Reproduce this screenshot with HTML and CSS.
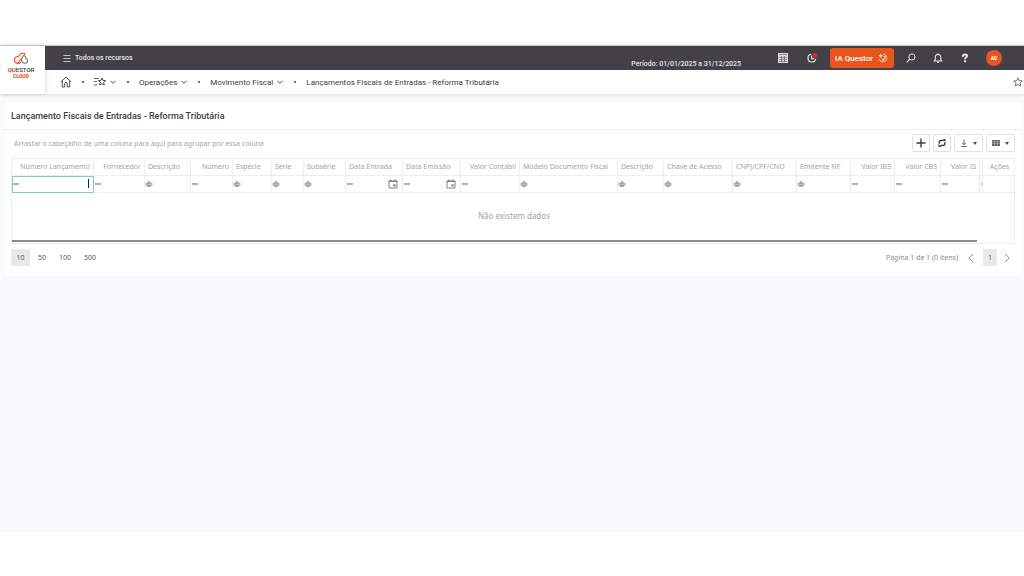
FILE: index.html
```html
<!DOCTYPE html>
<html lang="pt-BR">
<head>
<meta charset="utf-8">
<meta name="viewport" content="width=device-width, initial-scale=1">
<title>Lançamentos Fiscais de Entradas - Reforma Tributária</title>
<link rel="stylesheet" href="styles.css">
</head>
<body>
<svg class="defs" width="0" height="0" aria-hidden="true">
  <symbol id="chev" viewBox="0 0 8 8"><path d="M1.500 2.800 4 5.300l2.500-2.500" fill="none" stroke="currentColor" stroke-width=".9"/></symbol>
  <symbol id="eq" viewBox="0 0 8 8"><path d="M1 3.500h6M1 4.600h6" stroke="currentColor" stroke-width=".9"/></symbol>
  <symbol id="has" viewBox="0 0 8 8"><path d="M2.500 1.200h3v1.700h1.900v2.800H5.900v1.400H2.100V5.700H.6V2.900h1.900z" fill="currentColor"/><path d="M1 4.400h6" stroke="#fff" stroke-width=".3"/></symbol>
  <symbol id="cal" viewBox="0 0 10 10"><path d="M1 2h8v7H1z" fill="none" stroke="currentColor" stroke-width="1"/><path d="M.6 2.400h8.800M2.800.5v1.500M7.200.5v1.500" stroke="currentColor" stroke-width="1.200"/><path d="M5.400 5.300h2.200v2.200H5.400z" fill="currentColor"/></symbol>
</svg>
<div class="app">
  <header class="header">
    <a class="logo" href="#">
      <svg class="logo-mark" viewBox="0 0 16 13" aria-hidden="true"><g fill="none" stroke-width="1.100" stroke-linecap="round"><path d="M8 10.500C6 12 1.500 11.500 1.300 8.200 1.200 5.500 3.600 4 5.800 4.200 6.800 1.600 9.500.7 11.800 1.600M11.800 1.600C10.500 4.500 7.500 8 5.300 10.300" stroke="#e8541f"/><path d="M8.300 6C7.800 8.500 10 11.300 12.300 11.300 15.200 11.200 15.500 7 12.800 6.300 13 5 12.500 4.300 11.600 3.800" stroke="#77747b"/></g></svg>
      <span class="logo-name"><b class="accent">Q</b>UESTOR</span>
      <span class="logo-sub accent">CLOUD</span>
    </a>
    <div class="bars">
      <div class="topbar">
        <button class="all" type="button"><svg class="i8" viewBox="0 0 8 8"><path d="M.5 1.500h7M.5 4.500h7M.5 7.500h7" stroke="currentColor" stroke-width=".8"/></svg>Todos os recursos</button>
        <span class="period">Período: 01/01/2025 a 31/12/2025</span>
        <div class="tools">
          <button class="tool" type="button" aria-label="Calculadora"><svg class="i10" viewBox="0 0 10 10"><path d="M0 0h10v10H0z" fill="#dcdcdc"/><path d="M1 1.500h8M1 4.500h8M1 6.500h8M1 8.500h8M3.500 3v6M6.500 3v6" stroke="#56555a" stroke-width=".6"/></svg></button>
          <button class="tool" type="button" aria-label="Histórico"><svg class="i10" viewBox="0 0 10 10"><path d="M4.200 1.300a3.900 3.900 0 1 0 4.500 4.500M4.600 2.500v3.200h2.600" fill="none" stroke="#e8e8e8" stroke-width="1.100"/><circle cx="7.700" cy="2.400" r="2.300" fill="#e32626"/></svg></button>
          <button class="ia" type="button">IA Questor<svg class="i10" viewBox="0 0 10 10"><path d="M5 1.200a3.900 3.900 0 1 1-3.700 5" fill="none" stroke="#ffd9c9" stroke-width=".8"/><path d="m2.700.6.6 1.600 1.600.6-1.600.6-.6 1.600-.6-1.600L.5 2.800l1.600-.6z" fill="#fff"/><path d="m3.500 5 2 1.800M6 3.500l1.500 1.600M5 7.800 7.500 5" stroke="#fff" stroke-width=".7"/><circle cx="6.700" cy="3.600" r=".8" fill="#fff"/><circle cx="5" cy="6.800" r=".9" fill="#fff"/></svg></button>
          <button class="tool" type="button" aria-label="Pesquisar"><svg class="i10" viewBox="0 0 10 10"><circle cx="5.900" cy="4" r="3.100" fill="none" stroke="currentColor" stroke-width="1"/><path d="M3.700 6.200.7 9.300" stroke="currentColor" stroke-width="1.100"/></svg></button>
          <button class="tool" type="button" aria-label="Notificações"><svg class="i10" viewBox="0 0 10 10"><path d="M1.300 8h7.400L7.700 6.700V4.200C7.700 2.500 6.500 1.400 5 1.400S2.300 2.500 2.300 4.200v2.500zM5 .3v1M4 9.400h2" fill="none" stroke="currentColor" stroke-width="1.100"/></svg></button>
          <button class="tool" type="button" aria-label="Ajuda"><svg class="i10" viewBox="0 0 10 10"><path d="M2.900 3.800C2.700 1.900 3.800 1.500 5 1.500s2.100.5 2.100 1.500C7.100 4.500 5 4.200 5 6.300" fill="none" stroke="currentColor" stroke-width="1.900"/><path d="M4 7.300h2v2H4z" fill="currentColor"/></svg></button>
          <button class="avatar" type="button">AD</button>
        </div>
      </div>
      <nav class="crumbs" aria-label="Navegação">
        <a class="crumb" href="#" aria-label="Início"><svg class="i12" viewBox="0 0 12 12"><path d="M.8 6 6 1.200 11.200 6M2.300 5v6h2.400V7.500q0-1 1.300-1t1.300 1V11h2.400V5" fill="none" stroke="currentColor" stroke-width=".9"/></svg></a>
        <span class="dot"></span>
        <a class="crumb" href="#" aria-label="Favoritos"><svg class="i12" viewBox="0 0 12 12"><path d="M0 2.500h5M0 5.500h3M0 9h3" stroke="currentColor" stroke-width=".8"/><path d="m8 2 1 2.400 2.600.2-2 1.700.7 2.700L8 7.700 5.700 9l.7-2.700-2-1.700L7 4.400z" fill="none" stroke="currentColor" stroke-width=".9"/></svg><svg class="i8"><use href="#chev"/></svg></a>
        <span class="dot"></span>
        <a class="crumb" href="#">Operações<svg class="i8"><use href="#chev"/></svg></a>
        <span class="dot"></span>
        <a class="crumb" href="#">Movimento Fiscal<svg class="i8"><use href="#chev"/></svg></a>
        <span class="dot"></span>
        <a class="crumb" href="#">Lançamentos Fiscais de Entradas - Reforma Tributária</a>
        <button class="fav" type="button" aria-label="Favoritar"><svg class="i10" viewBox="0 0 10 10"><path d="m5 .9 1.200 2.700 3 .3L7 5.900l.6 3L5 7.400 2.400 8.900l.6-3L.8 3.900l3-.3z" fill="none" stroke="currentColor" stroke-width=".7"/></svg></button>
      </nav>
    </div>
  </header>
  <main class="card">
    <h1 class="title">Lançamento Fiscais de Entradas - Reforma Tributária</h1>
    <section class="grid">
      <div class="toolbar">
        <span class="hint">Arrastar o cabeçalho de uma coluna para aqui para agrupar por essa coluna</span>
        <button class="btn" type="button" aria-label="Adicionar"><svg class="i10" viewBox="0 0 10 10"><path d="M5 .5v9M.5 5h9" stroke="currentColor" stroke-width="1.400"/></svg></button>
        <button class="btn" type="button" aria-label="Atualizar"><svg class="i8" viewBox="0 0 8 8"><path d="M1.200 4.800V3.500Q1.200 1.500 3 1.500h2.800M6.800 3.200v1.300q0 2-1.800 2H2.200" fill="none" stroke="currentColor" stroke-width="1.400"/><path d="M5 0h2.500v3.200zM3 8H.5V4.800z" fill="currentColor"/></svg></button>
        <button class="btn wide" type="button" aria-label="Exportar"><svg class="i8" viewBox="0 0 8 8"><path d="M4 .5v5M2.200 3.800 4 5.600l1.800-1.800M1.200 7.500h5.600" fill="none" stroke="currentColor" stroke-width=".8"/></svg><span class="caret"></span></button>
        <button class="btn wide" type="button" aria-label="Colunas"><svg class="i8" viewBox="0 0 8 8"><path d="M0 1h8v6H0z" fill="#666"/><path d="M0 2.500h8M0 4.500h8M2.500 2v5M5.500 2v5" stroke="#ccc" stroke-width=".4"/></svg><span class="caret"></span></button>
      </div>
      <div class="frame">
        <table class="table">
          <colgroup><col class="w82"><col class="w51"><col class="w46"><col class="w42"><col class="w39"><col class="w32"><col class="w42"><col class="w57"><col class="w58"><col class="w59"><col class="w98"><col class="w46"><col class="w69"><col class="w64"><col class="w54"><col class="w44"><col class="w46"><col class="w39"><col class="w3"><col class="w33"></colgroup>
          <thead>
            <tr>
              <th class="num">Número Lançamento</th><th class="num">Fornecedor</th><th>Descrição</th><th class="num">Número</th><th>Espécie</th><th>Série</th><th>Subsérie</th><th>Data Entrada</th><th>Data Emissão</th><th class="num">Valor Contábil</th><th>Modelo Documento Fiscal</th><th>Descrição</th><th>Chave de Acesso</th><th>CNPJ/CPF/CNO</th><th>Emitente NF</th><th class="num">Valor IBS</th><th class="num">Valor CBS</th><th class="num">Valor IS</th><td></td><th class="actions">Ações</th>
            </tr>
            <tr class="filters">
              <td class="focused"><div class="filter"><svg class="i8"><use href="#eq"/></svg><input aria-label="Filtrar Número Lançamento"><span class="cursor"></span></div></td>
              <td><div class="filter"><svg class="i8"><use href="#eq"/></svg><input aria-label="Filtrar Fornecedor"></div></td>
              <td><div class="filter"><svg class="i8"><use href="#has"/></svg><input aria-label="Filtrar Descrição"></div></td>
              <td><div class="filter"><svg class="i8"><use href="#eq"/></svg><input aria-label="Filtrar Número"></div></td>
              <td><div class="filter"><svg class="i8"><use href="#has"/></svg><input aria-label="Filtrar Espécie"></div></td>
              <td><div class="filter"><svg class="i8"><use href="#has"/></svg><input aria-label="Filtrar Série"></div></td>
              <td><div class="filter"><svg class="i8"><use href="#has"/></svg><input aria-label="Filtrar Subsérie"></div></td>
              <td><div class="filter"><svg class="i8"><use href="#eq"/></svg><input aria-label="Filtrar Data Entrada"><svg class="i10"><use href="#cal"/></svg></div></td>
              <td><div class="filter"><svg class="i8"><use href="#eq"/></svg><input aria-label="Filtrar Data Emissão"><svg class="i10"><use href="#cal"/></svg></div></td>
              <td><div class="filter"><svg class="i8"><use href="#eq"/></svg><input aria-label="Filtrar Valor Contábil"></div></td>
              <td><div class="filter"><svg class="i8"><use href="#has"/></svg><input aria-label="Filtrar Modelo Documento Fiscal"></div></td>
              <td><div class="filter"><svg class="i8"><use href="#has"/></svg><input aria-label="Filtrar Descrição do modelo"></div></td>
              <td><div class="filter"><svg class="i8"><use href="#has"/></svg><input aria-label="Filtrar Chave de Acesso"></div></td>
              <td><div class="filter"><svg class="i8"><use href="#has"/></svg><input aria-label="Filtrar CNPJ/CPF/CNO"></div></td>
              <td><div class="filter"><svg class="i8"><use href="#has"/></svg><input aria-label="Filtrar Emitente NF"></div></td>
              <td><div class="filter"><svg class="i8"><use href="#eq"/></svg><input aria-label="Filtrar Valor IBS"></div></td>
              <td><div class="filter"><svg class="i8"><use href="#eq"/></svg><input aria-label="Filtrar Valor CBS"></div></td>
              <td><div class="filter"><svg class="i8"><use href="#eq"/></svg><input aria-label="Filtrar Valor IS"></div></td>
              <td><div class="filter"><svg class="i8"><use href="#eq"/></svg></div></td>
              <td></td>
            </tr>
          </thead>
          <tbody><tr><td class="empty" colspan="20">Não existem dados</td></tr></tbody>
        </table>
        <div class="scroll"><div class="thumb"></div></div>
      </div>
      <div class="pager">
        <button class="page on" type="button">10</button><button class="page" type="button">50</button><button class="page" type="button">100</button><button class="page" type="button">500</button>
        <span class="info">Página 1 de 1 (0 itens)</span>
        <button class="arrow" type="button" aria-label="Anterior"><svg class="i10" viewBox="0 0 10 10"><path d="M7 .8 2.800 5 7 9.200" fill="none" stroke="currentColor"/></svg></button>
        <button class="page on current" type="button">1</button>
        <button class="arrow" type="button" aria-label="Próxima"><svg class="i10" viewBox="0 0 10 10"><path d="M3 .8 7.200 5 3 9.200" fill="none" stroke="currentColor"/></svg></button>
      </div>
    </section>
  </main>
</div>
</body>
</html>
```
FILE: styles.css
```css
* { box-sizing: border-box; }
body { margin: 0; padding: 45px 0 44px; min-height: 100vh; display: flex; flex-direction: column; background: #fff; font-family: Roboto, sans-serif; font-size: 8px; color: #3e3d42; }
button { border: 0; padding: 0; background: none; font: inherit; color: inherit; display: flex; align-items: center; justify-content: center; }
a { color: inherit; text-decoration: none; }
svg { flex: none; display: block; }
.defs { position: absolute; }
.i8 { width: 8px; height: 8px; }
.i10 { width: 10px; height: 10px; }
.i12 { width: 12px; height: 12px; }
.accent { color: #e8541f; }

.app { flex: 1; background: #f8fafc; }
.header { display: flex; background: #fff; box-shadow: 0 1px 4px #0000001c; border-top: 1px solid #c9cccb; }
.logo { width: 45px; display: flex; flex-direction: column; align-items: center; padding: 6px 3px 0 0; box-shadow: 1px 0 4px #00000026; }
.logo-mark { width: 16px; height: 13px; }
.logo-name { font-size: 6px; line-height: 7px; font-weight: 500; margin-top: 1px; }
.logo-name b { font-weight: 900; }
.logo-sub { font-size: 5px; line-height: 6px; font-weight: 900; }
.bars { flex: 1; min-width: 0; }
.topbar { display: flex; align-items: center; height: 24px; background: #434147; color: #e6e6e6; padding: 0 22px 0 18px; }
.all { gap: 4px; font-size: 7px; font-weight: 500; }
.period { margin-left: auto; align-self: flex-end; font-size: 7px; line-height: 12px; font-weight: 500; }
.tools { display: flex; align-items: center; margin-left: 35px; gap: 12px; }
.tool { width: 14px; height: 20px; }
.tool + .tool { margin-left: 3px; }
.tool + .ia { margin-left: -1px; }
.ia + .tool { margin-left: -2px; }
.ia + .tool ~ .tool { margin-left: 1px; }
.ia { height: 20px; padding: 0 6px 0 5px; gap: 5px; border-radius: 3px; background: #ea541d; font-size: 8px; font-weight: 500; color: #fff; }
.avatar { width: 16px; height: 16px; margin-left: 2px; border-radius: 50%; background: #ea541d; font-size: 5px; font-weight: 700; color: #fff; }
.crumbs { display: flex; align-items: center; height: 24px; padding: 0 1px 0 15px; gap: 10px; }
.crumb { display: flex; align-items: center; gap: 3px; font-size: 8px; }
.dot { width: 2px; height: 2px; border-radius: 1px; background: #3e3d42; }
.fav { margin-left: auto; }

.card { margin: 8px 3px 0 5px; background: #fff; border-radius: 3px; box-shadow: 0 0 2px #00000008; }
.title { margin: 0; padding: 1px 6px 0; font-size: 9px; line-height: 26px; font-weight: 500; border-bottom: 1px solid #edeff0; }
.grid { padding: 0 6px 5px; font-family: "Noto Sans", sans-serif; font-size: 7px; color: #a0a4a8; }
.toolbar { display: flex; align-items: center; gap: 3px; height: 28px; padding-bottom: 2px; }
.hint { margin-right: auto; padding-left: 3px; }
.btn { width: 18px; height: 18px; border: 1px solid #dfe1e2; border-radius: 2px; color: #3c3c3c; }
.wide { width: 29px; gap: 5px; }
.caret { border: 2px solid transparent; border-top: 3px solid #444; border-bottom: 0; }
.frame { border: 1px solid #eceeef; }
.table { width: 100%; table-layout: fixed; border-collapse: separate; border-spacing: 0; }
.table th, .table td { padding: 0 3px 1px; height: 17px; line-height: 14px; font-weight: 400; text-align: left; white-space: nowrap; overflow: hidden; border-right: 1px solid #eceeef; border-bottom: 1px solid #eceeef; }
.table th:last-child, .table td:last-child { border-right: 0; }
.table .num { text-align: right; }
.table .actions { text-align: center; }
.table .filters td { padding: 0 0 1px; }
.filter { display: flex; align-items: center; height: 14px; padding: 0 4px 0 0; color: #a0a5ab; }
.filter input { flex: 1; min-width: 0; width: 0; border: 0; padding: 0; background: none; outline: 0; font: inherit; }
.filter .i10 { color: #7b838b; }
.table .filters .focused { outline: 1px solid #83c9de; outline-offset: -1px; }
.cursor { width: 1px; height: 9px; background: #222; }
.table .empty { height: 47px; text-align: center; font-size: 8px; border: 0; }
.scroll { height: 3px; padding-right: 37px; }
.thumb { height: 2px; background: #8c8c8c; }
.pager { display: flex; align-items: center; height: 27px; color: #555; }
.page { height: 17px; padding: 0 5px; margin-right: 3px; border-radius: 1px; }
.page:first-child { width: 19px; }
.on { background: #e7e9eb; }
.info { margin-left: auto; margin-right: 8px; color: #888d91; }
.current { width: 14px; margin: 0 5px 0 7px; padding: 0; }
.arrow { color: #888d91; margin-right: 3px; }
.arrow:has(+ .current) { margin-right: 0; }

.w3 { width: 3px; }
.w32 { width: 32px; }
.w33 { width: 33px; }
.w39 { width: 39px; }
.w42 { width: 42px; }
.w44 { width: 44px; }
.w46 { width: 46px; }
.w51 { width: 51px; }
.w54 { width: 54px; }
.w57 { width: 57px; }
.w58 { width: 58px; }
.w59 { width: 59px; }
.w64 { width: 64px; }
.w69 { width: 69px; }
.w82 { width: 82px; }
.w98 { width: 98px; }
```
